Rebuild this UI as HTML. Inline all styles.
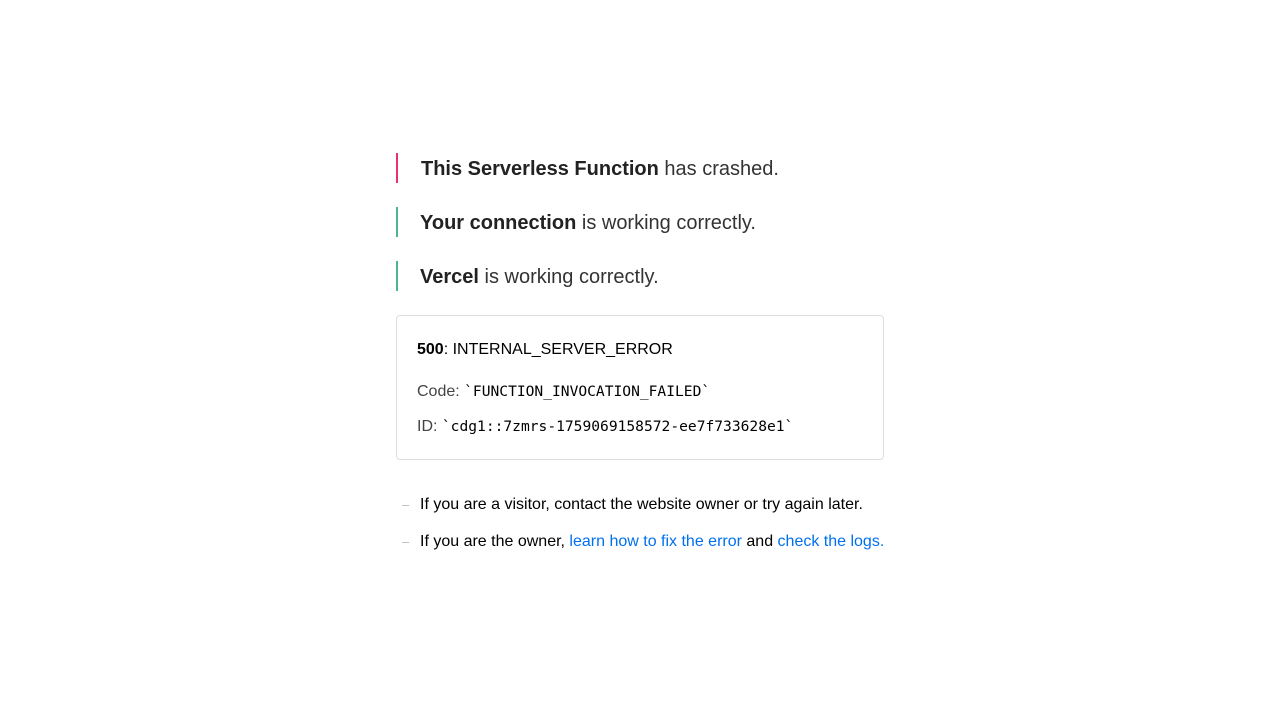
<!DOCTYPE html>
<html><head><meta charset="utf-8"><style>
body{margin:0;background:#fff;font-family:"Liberation Sans",Arial,sans-serif;}
.h{position:absolute;left:396px;height:30px;border-left:2px solid;font-size:20px;color:#333;line-height:32px;padding-left:22px;white-space:nowrap}
.h b{color:#222}
.box{position:absolute;left:396px;top:315px;width:486px;height:143px;border:1px solid #ddd;border-radius:4px}
.t{position:absolute;left:20px;white-space:nowrap;font-size:16px;line-height:20px}
.m{font-family:"DejaVu Sans Mono","Liberation Mono",monospace;font-size:14.6px;color:#000}
.li{position:absolute;left:402px;font-size:16px;line-height:20px;white-space:nowrap;color:#000}
.li span.d{color:#bbb;display:inline-block;width:18px;font-size:13px}
a{color:#0070f3;text-decoration:none}
</style></head><body>
<div class="h" style="top:153px;border-color:#e9326e;padding-left:23px"><b>This Serverless Function</b> has crashed.</div>
<div class="h" style="top:207px;border-color:#50b38f"><b>Your connection</b> is working correctly.</div>
<div class="h" style="top:261px;border-color:#50b38f"><b>Vercel</b> is working correctly.</div>
<div class="box">
<div class="t" style="top:24px;color:#000"><b>500</b>: INTERNAL_SERVER_ERROR</div>
<div class="t" style="top:66px;color:#444">Code: <span class="m">`FUNCTION_INVOCATION_FAILED`</span></div>
<div class="t" style="top:101px;color:#444">ID: <span class="m">`cdg1::7zmrs-1759069158572-ee7f733628e1`</span></div>
</div>
<div class="li" style="top:495px"><span class="d">–</span>If you are a visitor, contact the website owner or try again later.</div>
<div class="li" style="top:532px"><span class="d">–</span>If you are the owner, <a>learn how to fix the error</a> and <a>check the logs.</a></div>
</body></html>
